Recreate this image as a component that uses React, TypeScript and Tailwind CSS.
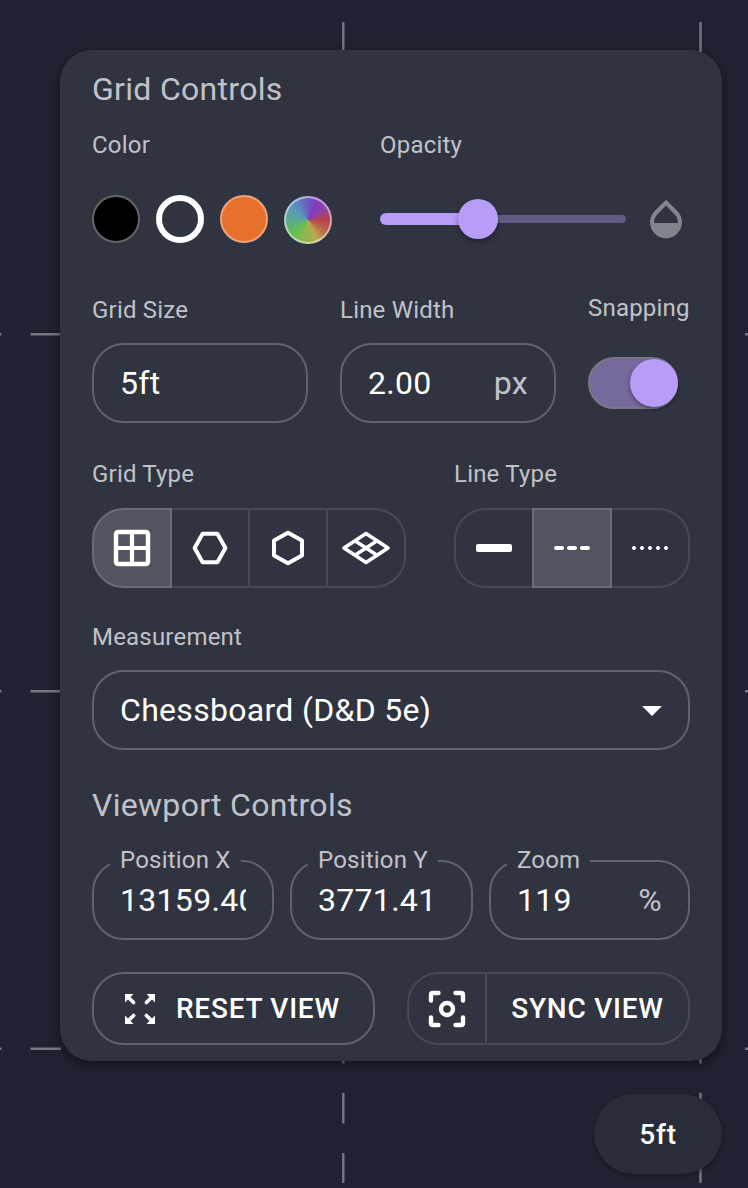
import React, { useState } from 'react';
import { MdArrowDropDown, MdOpacity } from 'react-icons/md';
import clsx from 'clsx';

const iconProps = {
  width: 48,
  height: 48,
  viewBox: '0 0 48 48',
  fill: 'none',
  stroke: 'currentColor',
  strokeWidth: 4,
  strokeLinejoin: 'round' as const,
  strokeLinecap: 'round' as const,
};

const SquareIcon = () => (
  <svg {...iconProps}>
    <rect x="8" y="8" width="32" height="32" rx="2.2" strokeWidth="4.4" />
    <path d="M24 8v32M8 24h32" strokeWidth="4.2" />
  </svg>
);

const HexHorizontalIcon = () => (
  <svg {...iconProps}>
    <path d="M16.6 9.7h14.8L39.4 24l-8 14.3H16.6L8.6 24z" />
  </svg>
);

const HexVerticalIcon = () => (
  <svg {...iconProps}>
    <path d="M24 8.7l14 7.8v15L24 39.3l-14-7.8v-15z" />
  </svg>
);

const IsometricIcon = () => (
  <svg {...iconProps} strokeWidth={3.6}>
    <path d="M24 9.6L46 24 24 38.4 2 24zM13 16.8l22 14.4M35 16.8L13 31.2" />
  </svg>
);

const SolidIcon = () => (
  <svg {...iconProps} stroke="none" fill="currentColor">
    <rect x="6" y="20" width="36" height="8" rx="2" />
  </svg>
);

const DashedIcon = () => (
  <svg {...iconProps}>
    <path d="M8 24h6M21 24h6M34 24h6" />
  </svg>
);

const DottedIcon = () => (
  <svg {...iconProps} stroke="none" fill="currentColor">
    {[8, 16, 24, 32, 40].map(x => (
      <circle key={x} cx={x} cy="24" r="2" />
    ))}
  </svg>
);

const FocusIcon = () => (
  <svg {...iconProps} strokeWidth={4.4}>
    <path d="M8 15.500V10Q8 8 10 8H15.500M32.500 8H38Q40 8 40 10V15.500M40 32.500V38Q40 40 38 40H32.500M15.500 40H10Q8 40 8 38V32.500" />
    <circle cx="24" cy="24" r="6" />
  </svg>
);

// One outward arrow, rotated into each corner
const ResetIcon = () => (
  <svg width="40" height="40" viewBox="0 0 40 40" fill="currentColor">
    {[0, 90, 180, 270].map(angle => (
      <g key={angle} transform={`rotate(${angle} 20 20)`}>
        <path d="M5 5h8.500L5 13.500z" stroke="none" />
        <path d="M8 8l5.600 5.600" stroke="currentColor" strokeWidth="3.600" strokeLinecap="round" />
      </g>
    ))}
  </svg>
);

// Dashed map grid behind the panel
const GridCanvas = () => (
  <svg className="absolute inset-0" width="748" height="1188" stroke="#777785" strokeWidth="2.4">
    {[343.3, 700.5].map(x => (
      <path key={x} d={`M${x} 22V52M${x} 1033V1063.500M${x} 1093V1123.500M${x} 1153V1183`} />
    ))}
    {[334.3, 691.3, 1048.7].map(y => (
      <path key={y} d={`M0 ${y}H1.500M30.500 ${y}H61M745 ${y}H748`} />
    ))}
  </svg>
);

const Label = ({ children }: { children: React.ReactNode }) => (
  <div className="h-8 text-[24px] leading-8 tracking-[0.2px] whitespace-nowrap text-[#c1c2c9]">{children}</div>
);

interface ToggleGroupProps {
  icons: React.ComponentType[];
  value: number;
  onChange: (value: number) => void;
}

const ToggleGroup = ({ icons, value, onChange }: ToggleGroupProps) => (
  <div className="flex">
    {icons.map((Icon, i) => (
      <button
        key={i}
        onClick={() => onChange(i)}
        className={clsx(
          'flex h-20 w-20 items-center justify-center border-2 text-white',
          i === 0 ? 'rounded-l-[32px]' : '-ml-0.5',
          i === icons.length - 1 && 'rounded-r-[32px]',
          i === value ? 'relative border-[#6b6d77] bg-[#52545f]' : 'border-[#474954]'
        )}
      >
        <Icon />
      </button>
    ))}
  </div>
);

interface FieldProps {
  label?: string;
  value: string;
  unit?: string;
  className?: string;
}

const Field = ({ label, value, unit, className }: FieldProps) => (
  <div className={clsx('relative flex h-20 items-center px-7', className)}>
    <fieldset className={clsx('pointer-events-none absolute inset-x-0 bottom-0 rounded-[32px] border-2 border-[#60626d] px-4', label ? '-top-[15px]' : 'top-0')}>
      {label && (
        <legend className="h-8 px-2.5 text-[24px] leading-[31px] tracking-[0.2px] whitespace-nowrap text-[#c1c2c9]">{label}</legend>
      )}
    </fieldset>
    <span className="flex-1 overflow-hidden text-[32px] leading-10 tracking-[0.3px] whitespace-nowrap text-white">{value}</span>
    {unit && <span className="text-[32px] leading-10 tracking-[0.3px] text-[#c1c2c9]">{unit}</span>}
  </div>
);

const swatch = 'h-12 w-12 rounded-full border-2';

export default function App() {
  const [gridType, setGridType] = useState(0);
  const [lineType, setLineType] = useState(1);

  return (
    <div className="relative h-[1188px] w-[748px] overflow-hidden bg-[#1f2230] pt-[50px] pl-[60px] font-['Roboto',sans-serif]">
      <GridCanvas />

      <div className="relative h-[1011px] w-[662px] rounded-[32px] bg-[#303440] px-8 pt-[19px] shadow-[0_4px_12px_rgba(0,0,0,0.45)]">
        <h2 className="h-10 text-[32px] leading-10 tracking-[0.3px] text-[#c1c2c9]">Grid Controls</h2>

        <div className="mt-5 flex">
          <div className="w-72">
            <Label>Color</Label>
            <div className="mt-[34px] flex gap-4">
              <button className={clsx(swatch, 'border-[#656565] bg-black')} />
              <button className="h-12 w-12 rounded-full border-[6px] border-white" />
              <button className={clsx(swatch, 'border-[#f0a37b] bg-[#e8702d]')} />
              <button className={clsx(swatch, 'relative top-px border-white/50 bg-[conic-gradient(#6a5cbf,#813abf_25deg,#8f40a8_55deg,#b8414b_90deg,#b96b4c_125deg,#b9aa50_155deg,#96b34f_185deg,#65bf4c_225deg,#5ba898_275deg,#5994bf_310deg,#6a5cbf)] bg-origin-border')} />
            </div>
          </div>
          <div>
            <Label>Opacity</Label>
            <div className="mt-[34px] flex items-center">
              <div className="relative flex h-12 w-[246px] items-center">
                <div className="h-2 w-full rounded-full bg-[#625a84]" />
                <div className="absolute left-0 h-3 w-[110px] rounded-full bg-[#b79cf8]" />
                <div className="absolute left-[78px] h-10 w-10 rounded-full bg-[#b79cf8] shadow-[0_3px_5px_rgba(0,0,0,0.35)]" />
              </div>
              <MdOpacity className="ml-4 h-12 w-12 text-[#83858c]" />
            </div>
          </div>
        </div>

        <div className="mt-[51px] flex gap-8">
          <div>
            <Label>Grid Size</Label>
            <Field value="5ft" className="mt-[17px] w-[216px]" />
          </div>
          <div>
            <Label>Line Width</Label>
            <Field value="2.00" unit="px" className="mt-[17px] w-[216px]" />
          </div>
          <div className="-mt-0.5">
            <Label>Snapping</Label>
            <button className="mt-[33px] flex h-[52px] w-[90px] items-center justify-end rounded-full border-2 border-[#7b7787] bg-[#76699b]">
              <span className="-mr-0.5 h-12 w-12 rounded-full bg-[#b79cf8] shadow-[0_2px_4px_rgba(0,0,0,0.4)]" />
            </button>
          </div>
        </div>

        <div className="mt-[35px] flex justify-between">
          <div>
            <Label>Grid Type</Label>
            <div className="mt-[18px]">
              <ToggleGroup
                icons={[SquareIcon, HexHorizontalIcon, HexVerticalIcon, IsometricIcon]}
                value={gridType}
                onChange={setGridType}
              />
            </div>
          </div>
          <div>
            <Label>Line Type</Label>
            <div className="mt-[18px]">
              <ToggleGroup icons={[SolidIcon, DashedIcon, DottedIcon]} value={lineType} onChange={setLineType} />
            </div>
          </div>
        </div>

        <div className="mt-[33px]">
          <Label>Measurement</Label>
          <button className="mt-[17px] flex h-20 w-full items-center justify-between rounded-[32px] border-2 border-[#60626d] pr-3 pl-[26px] text-[32px] leading-10 tracking-[0.3px] text-white">
            Chessboard (D&amp;D 5e)
            <MdArrowDropDown className="h-12 w-12" />
          </button>
        </div>

        <h2 className="mt-[35px] h-10 text-[32px] leading-10 tracking-[0.3px] text-[#c1c2c9]">Viewport Controls</h2>

        <div className="mt-[35px] flex gap-4">
          <Field label="Position X" value="13159.40" className="w-[182px]" />
          <Field label="Position Y" value="3771.41" className="w-[183px]" />
          <Field label="Zoom" value="119" unit="%" className="w-[201px]" />
        </div>

        <div className="mt-8 flex justify-between text-[28px] font-medium tracking-[0.75px] text-white">
          <button className="flex h-[73px] w-[283px] items-center gap-4 rounded-[32px] border-2 border-[#60626d] pl-[26px] whitespace-nowrap">
            <ResetIcon />
            RESET VIEW
          </button>
          <div className="flex">
            <button className="flex h-[73px] w-20 items-center justify-center rounded-l-[32px] border-2 border-[#474954]">
              <FocusIcon />
            </button>
            <button className="-ml-0.5 h-[73px] w-[205px] rounded-r-[32px] border-2 border-[#474954] whitespace-nowrap">
              SYNC VIEW
            </button>
          </div>
        </div>
      </div>

      <div className="relative mt-[33px] ml-[534px] flex h-20 w-32 items-center justify-center rounded-full bg-[#292c39] pt-0.5 text-[28px] font-medium tracking-[0.8px] text-white shadow-[0_2px_4px_rgba(0,0,0,0.3)]">
        5ft
      </div>
    </div>
  );
}
